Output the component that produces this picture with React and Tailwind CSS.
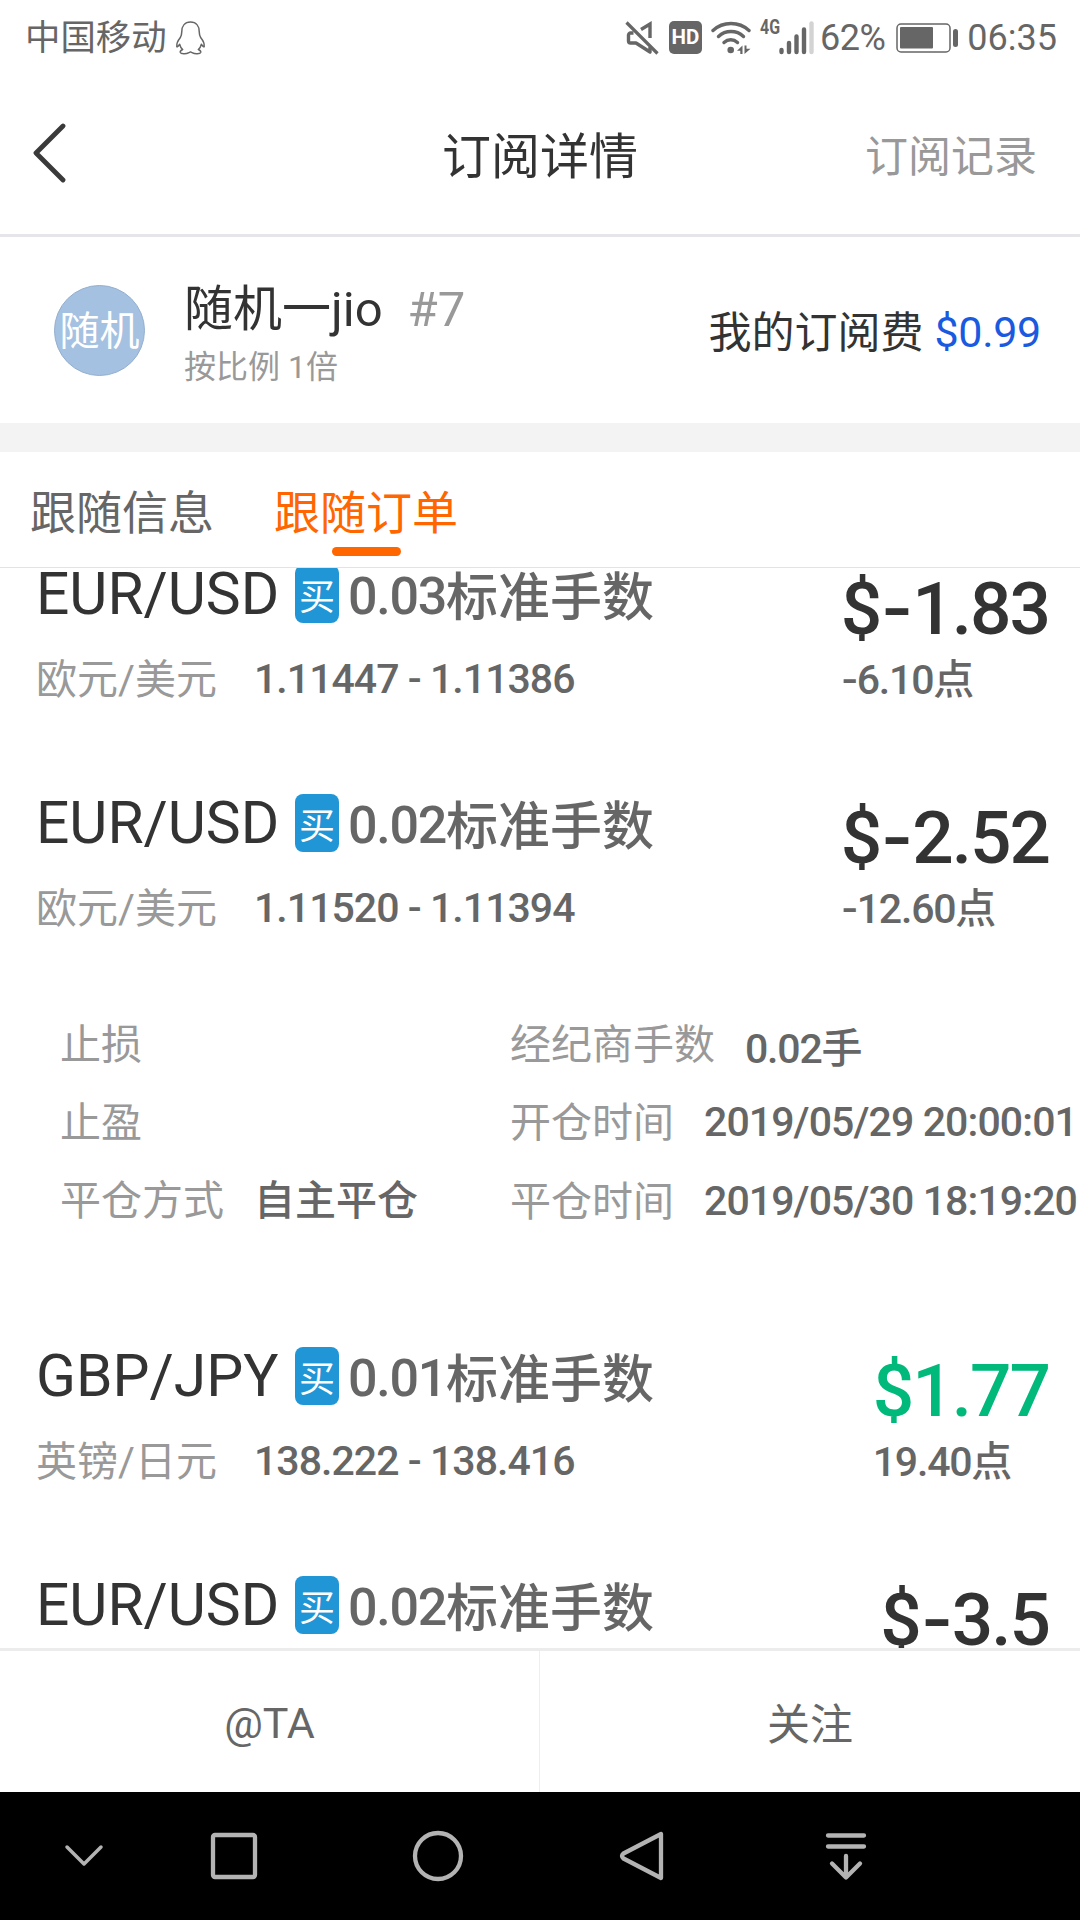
import React, { useState } from "react";

const orders = [
  {
    id: 1,
    symbol: "EUR/USD",
    name: "欧元/美元",
    lots: "0.03",
    range: "1.11447 - 1.11386",
    loss: true,
    amount: "1.83",
    points: "6.10",
  },
  {
    id: 2,
    symbol: "EUR/USD",
    name: "欧元/美元",
    lots: "0.02",
    range: "1.11520 - 1.11394",
    loss: true,
    amount: "2.52",
    points: "12.60",
    detail: {
      closeType: "自主平仓",
      brokerLots: "0.02",
      openTime: "2019/05/29 20:00:01",
      closeTime: "2019/05/30 18:19:20",
    },
  },
  {
    id: 3,
    symbol: "GBP/JPY",
    name: "英镑/日元",
    lots: "0.01",
    range: "138.222 - 138.416",
    loss: false,
    amount: "1.77",
    points: "19.40",
  },
  {
    id: 4,
    symbol: "EUR/USD",
    lots: "0.02",
    loss: true,
    amount: "3.5",
  },
];

function StatusBar() {
  return (
    <div className="flex h-[75px] items-center pl-[25px] pr-[23px] text-[36px] text-[#666]">
      <span className="pt-[2px] text-[35.4px] leading-none">中国移动</span>
      <svg className="ml-[8px] h-[36px] w-[31px]" viewBox="0 0 31 36" fill="none" stroke="currentColor" strokeWidth="1.5" strokeLinejoin="round">
        <path d="M15.500 2C9.500 2 6.800 6.500 6.800 11.500c0 3-.4 4-1.600 6.300C3 20.500 1.500 23.500 1.800 26.500c.2 1 1.500-.3 2.900-2.200.5 2.300 1.500 3.900 3 5.200-2 .8-2.700 1.900-2.400 2.900.6 1.600 5.500 2 8.700.2l1.500-.7 1.500.7c3.200 1.800 8.100 1.400 8.700-.2.3-1-.4-2.100-2.400-2.900 1.500-1.300 2.500-2.900 3-5.200 1.400 1.900 2.700 3.200 2.900 2.200.3-3-1.200-6-3.400-8.700-1.200-2.300-1.600-3.300-1.600-6.300C24.200 6.500 21.500 2 15.500 2z" />
      </svg>
      <div className="ml-auto flex items-center">
        <svg className="h-[34px] w-[34px]" viewBox="0 0 34 34" fill="none" stroke="currentColor" strokeWidth="3.400">
          <path d="M1.500 1.500l31 31" strokeWidth="3.200" />
          <path d="M8.500 12H5.500a2 2 0 0 0-2 2v6a2 2 0 0 0 2 2h5.500l14 9V26" strokeLinejoin="round" />
          <path d="M16 8.500L25 3V17" />
        </svg>
        <div className="ml-[10px] flex h-[33px] w-[33px] items-center justify-center rounded-[5px] bg-[#666] text-[20.500px] font-bold leading-none text-white">
          HD
        </div>
        <svg className="ml-[9px] h-[34px] w-[40px]" viewBox="0 0 40 34" fill="none" stroke="currentColor" strokeWidth="3.400" strokeLinecap="round">
          <path d="M2 9.500c10-9.300 26-9.300 36 0" />
          <path d="M7.500 15.500c7-6.600 18-6.600 25 0" />
          <path d="M13 21.500c4-3.700 9.500-3.700 13.500 0" />
          <circle cx="19.700" cy="29" r="3.300" fill="currentColor" stroke="none" />
          <path d="M31.500 24.500V33h-2.200v-3.200h-3.300zM33.500 33v-8.500h2v3.300h4z" fill="currentColor" stroke="none" />
        </svg>
        <span className="mb-[21px] ml-[9px] w-[19px] origin-left scale-x-[0.76] text-[21px] font-bold leading-none">4G</span>
        <svg className="h-[34px] w-[35px]" viewBox="18 0 35 34" stroke="currentColor" strokeWidth="4.400" strokeLinecap="round">
          <path d="M20.500 31v-2M28 31V22M35.500 31V15.500M43 31V8.500" />
          <path d="M50.500 31V2.500" stroke="#d3d3d3" />
        </svg>
        <span className="ml-[6px] leading-none tracking-[-0.5px]">62%</span>
        <svg className="ml-[11px] h-[30px] w-[62px]" viewBox="0 0 62 30" fill="none" stroke="currentColor">
          <rect x="1" y="1" width="53" height="28" rx="4" strokeWidth="1.500" />
          <rect x="4" y="4" width="33" height="21.500" rx="1" fill="currentColor" stroke="none" />
          <rect x="57" y="6" width="5" height="18" rx="2.500" fill="currentColor" stroke="none" />
        </svg>
        <span className="ml-[9px] leading-none">06:35</span>
      </div>
    </div>
  );
}

function Header() {
  return (
    <header className="grid h-[162px] grid-cols-3 items-center border-b-[3px] border-[#e5e5ea]">
      <button className="-mt-[4px] pl-[32px]">
        <svg className="h-[62px] w-[34px]" viewBox="0 0 34 62" fill="none" stroke="#3a3a3a" strokeWidth="4.800" strokeLinecap="round" strokeLinejoin="round">
          <path d="M31 4L4 31l27 27" />
        </svg>
      </button>
      <h1 className="pt-[6px] text-center text-[49px] leading-none text-[#333]">订阅详情</h1>
      <button className="pr-[43px] pt-[5px] text-right text-[43px] leading-none text-[#999]">订阅记录</button>
    </header>
  );
}

function Profile() {
  return (
    <section className="flex h-[186px] items-center pl-[54px] pr-[39px]">
      <div className="flex h-[91px] w-[91px] items-center justify-center rounded-full border border-[#94afce] bg-[#a5c1e1] pt-[3px] text-[40px] leading-none text-white">
        随机
      </div>
      <div className="ml-[39px] pt-[11px]">
        <div className="flex items-baseline text-[49px] leading-[62px] text-[#333]">
          随机一jio
          <span className="ml-[25px] text-[#999]">#7</span>
        </div>
        <div className="pt-px text-[32px] leading-[50px] text-[#999]">按比例 1倍</div>
      </div>
      <div className="ml-auto flex items-center pt-[4px] text-[43px] leading-none text-[#333]">
        <span className="pt-[3px]">我的订阅费</span>
        <span className="ml-[11px] tracking-[-0.3px] text-[#1a5ae0]">$0.99</span>
      </div>
    </section>
  );
}

function Tabs({ tab, onChange }) {
  const items = [
    { key: "info", label: "跟随信息" },
    { key: "orders", label: "跟随订单" },
  ];

  return (
    <nav className="flex h-[116px] gap-[60px] border-b border-[#e3e3e3] pl-[30px]">
      {items.map((item) => (
        <button
          key={item.key}
          onClick={() => onChange(item.key)}
          className={
            tab === item.key
              ? "flex flex-col items-center text-[46px] text-[#ff6600]"
              : "flex flex-col items-center text-[46px] text-[#666]"
          }
        >
          <span className="mb-[2px] mt-[29px] leading-[64px]">{item.label}</span>
          {tab === item.key && <span className="h-[9px] w-[69px] rounded-full bg-[#ff6600]" />}
        </button>
      ))}
    </nav>
  );
}

function OrderDetail({ detail }) {
  return (
    <div className="flex h-[324px] whitespace-nowrap pl-[60px] pt-[3px] text-[41px] leading-[78px] text-[#999]">
      <div className="w-[450px] shrink-0">
        <div>止损</div>
        <div>止盈</div>
        <div className="flex">
          平仓方式
          <span className="ml-[30px] font-medium text-[#666]">{detail.closeType}</span>
        </div>
      </div>
      <div>
        <div className="flex h-[78px]">
          经纪商手数
          <span className="ml-[30px] pt-[4px] font-medium tracking-[-1.2px] text-[#666]">{detail.brokerLots}手</span>
        </div>
        <div className="flex">
          开仓时间
          <span className="-mt-px ml-[30px] font-medium tracking-[-0.9px] text-[#666]">{detail.openTime}</span>
        </div>
        <div className="flex pt-px">
          平仓时间
          <span className="-mt-px ml-[30px] font-medium tracking-[-0.9px] text-[#666]">{detail.closeTime}</span>
        </div>
      </div>
    </div>
  );
}

function OrderRow({ order }) {
  return (
    <div>
      <div className="flex h-[229px] justify-between pl-[36px] pr-[31px] pt-[20px]">
        <div>
          <div className="flex h-[58px] items-center">
            <span className="w-[259px] text-[58.7px] leading-none text-[#333]">{order.symbol}</span>
            <span className="flex h-[58px] w-[44px] items-center justify-center rounded-[8px] bg-[#2196d6] pt-[7px] text-[36px] leading-none text-white">
              买
            </span>
            <span className="ml-[9px] pt-[6px] text-[52px] font-medium leading-none tracking-[-1.3px] text-[#666]">
              {order.lots}
            </span>
            <span className="pt-[10px] text-[52px] font-medium leading-none text-[#666]">标准手数</span>
          </div>
          {order.name && (
            <div className="mt-[31px] flex text-[41px] leading-[50px]">
              <span className="w-[218px] pt-px text-[#999]">{order.name}</span>
              <span className="font-medium tracking-[-0.95px] text-[#666]">{order.range}</span>
            </div>
          )}
        </div>
        <div className="font-medium">
          <div
            className={
              order.loss
                ? "mt-[4px] text-[73px] leading-[80px] tracking-[-2px] text-[#333]"
                : "mt-[4px] text-[73px] leading-[80px] tracking-[-2px] text-[#00b97a]"
            }
          >
            $
            {order.loss && <span className="inline-block w-[32px] scale-x-[1.2] text-center">-</span>}
            {order.amount}
          </div>
          {order.points && (
            <div className="mt-[6px] text-[41px] leading-[50px] tracking-[-1.2px] text-[#666]">
              {order.loss && <span className="inline-block w-[16px] scale-x-[1.15] text-center">-</span>}
              {order.points}点
            </div>
          )}
        </div>
      </div>
      {order.detail && <OrderDetail detail={order.detail} />}
    </div>
  );
}

function AndroidNav() {
  return (
    <div className="h-[128px] bg-black">
      <svg className="h-[128px] w-[1080px]" viewBox="0 0 1080 128" fill="none" stroke="#b3b3b3" strokeWidth="4.300" strokeLinecap="round" strokeLinejoin="round">
        <path d="M67 55l17 17 17-17" strokeWidth="3.500" />
        <rect x="213" y="43" width="42" height="42" rx="2" />
        <circle cx="438" cy="64" r="23" />
        <path d="M661 42v44L623.500 66.500q-3-2.500 0-5z" />
        <path d="M828 43.500h36M828 54.500h36M846 64v21M832 71.500L846 85.500l14-14" />
      </svg>
    </div>
  );
}

export default function App() {
  const [tab, setTab] = useState("orders");

  return (
    <div className="flex h-[1920px] w-[1080px] flex-col overflow-hidden bg-white font-['Roboto','Noto_Sans_CJK_SC',sans-serif]">
      <StatusBar />
      <Header />
      <Profile />
      <div className="h-[29px] bg-[#f3f3f3]" />
      <Tabs tab={tab} onChange={setTab} />

      <main className="h-[1080px] overflow-hidden">
        <div className="-mt-[23px]">
          {orders.map((order) => (
            <OrderRow key={order.id} order={order} />
          ))}
        </div>
      </main>

      <footer className="grid h-[144px] grid-cols-2 border-t-[3px] border-[#ececec] text-[43px] text-[#666]">
        <button className="border-r border-[#eee] pt-[4px]">@TA</button>
        <button className="pt-[7px]">关注</button>
      </footer>
      <AndroidNav />
    </div>
  );
}
